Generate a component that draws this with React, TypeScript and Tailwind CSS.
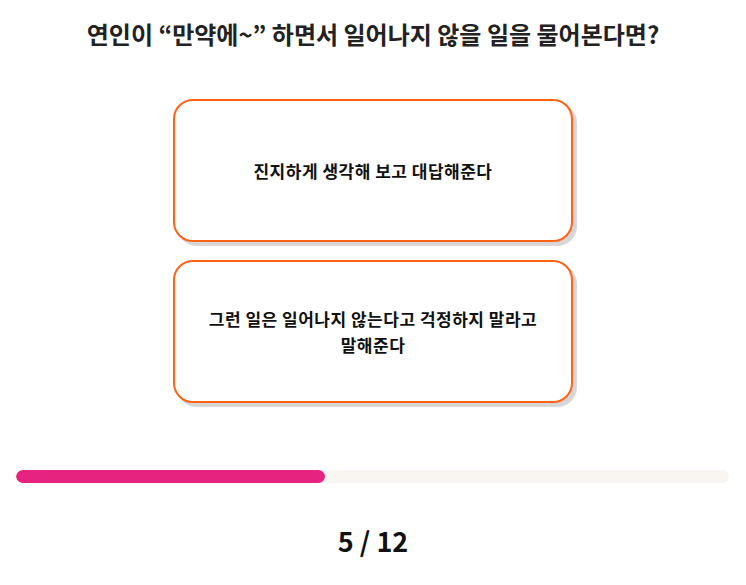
import React from 'react';

const options = [
  '진지하게 생각해 보고 대답해준다',
  '그런 일은 일어나지 않는다고 걱정하지 말라고 말해준다',
];

export default function App() {
  const current = 5;
  const total = 12;

  return (
    <div
      className="min-h-screen bg-white flex flex-col items-center text-[#111]"
      style={{ fontFamily: '"Noto Sans CJK KR", "Noto Sans", sans-serif' }}
    >
      <h1 className="pt-[19px] text-[24px] leading-[30px] font-bold text-[#222]">
        연인이 “만약에~” 하면서 일어나지 않을 일을 물어본다면?
      </h1>

      <div className="mt-[50px] flex flex-col gap-[18px]">
        {options.map((text) => (
          <button
            key={text}
            className="w-[400px] h-[143px] rounded-[20px] border-2 border-[#ff6316] bg-white shadow-[4px_4px_1px_#d6d6d6] flex items-center justify-center px-[24px] text-center text-[17px] leading-[26px] tracking-[0.5px] font-bold"
          >
            {text}
          </button>
        ))}
      </div>

      <div className="mt-[67px] w-full pl-[16px] pr-[17px]">
        <div className="h-[13px] w-full rounded-full bg-[#f9f6f2] overflow-hidden">
          <div className="h-full w-[43.4%] rounded-full bg-[#e6247f]" />
        </div>
      </div>

      <div className="mt-[42px] text-[27px] leading-[32px] font-bold">
        {current} / {total}
      </div>
    </div>
  );
}
